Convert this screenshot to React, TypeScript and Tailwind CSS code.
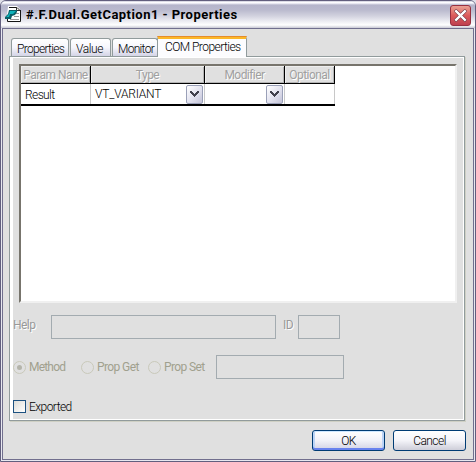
import type { ReactNode } from "react";

function Tab({ label, className }: { label: string; className: string }) {
  return (
    <div className={`h-[18px] whitespace-nowrap rounded-t-[3px] border border-b-0 border-[#919b9c] bg-linear-to-b from-white via-[#f6f6fc] to-[#d4d4e6] pl-[5px] pt-[2px] leading-[16px] ${className}`}>
      {label}
    </div>
  );
}

function HeadCell({ children, className }: { children: ReactNode; className: string }) {
  return (
    <div className={`h-[18px] border-r border-b border-black bg-[#e0e0e0] text-center font-normal leading-[19px] text-[#a0a0a0] shadow-[inset_1px_1px_0_#eeeeee,inset_-1px_-1px_0_#b4b4b4] [text-shadow:1px_1px_0_#fff] ${className}`}>
      {children}
    </div>
  );
}

function DropButton() {
  return (
    <button className="flex h-[19px] w-[17px] items-center justify-center rounded-[2px] border border-[#9aa0b8] bg-linear-to-br from-white via-[#e4e4f0] to-[#c4c4d8]">
      <svg width="9" height="6" viewBox="0 0 9 6" shapeRendering="crispEdges" fill="#40404c">
        <path d="M0 0h2v1h1v1h1v1h1v-1h1v-1h1v-1h2v2h-1v1h-1v1h-1v1h-1v1h-1v-1h-1v-1h-1v-1h-1v-1h-1z" />
      </svg>
    </button>
  );
}

function Radio({ label, checked, className }: { label: string; checked?: boolean; className: string }) {
  return (
    <label className={`flex items-center gap-[3px] font-normal text-[#a0a08e] ${className}`}>
      <span className="flex size-[13px] shrink-0 items-center justify-center rounded-full border border-[#c9c9ba]">
        {checked && <span className="size-[5px] rounded-full bg-[#b4b4aa]" />}
      </span>
      {label}
    </label>
  );
}

export default function App() {
  return (
    <div className="flex h-[462px] w-[476px] flex-col overflow-hidden bg-[#e0e0e8] font-[Roboto,sans-serif] text-[12px] font-light tracking-[-0.55px] text-black">
      <div className="flex h-[462px] flex-col rounded-t-[6px] border border-[#625f7e] bg-[#e8e8f0]">
        <header className="flex h-[27px] shrink-0 items-center rounded-t-[5px] bg-[linear-gradient(to_bottom,#b9b9cd_0,#ffffff_1px,#fafaff_2px,#b5b5cb_4px,#babace_9px,#d2d2df_15px,#f0f0f5_21px,#ffffff_24px,#c8c8d4_27px)] pl-[4px]">
          <svg width="17" height="17" viewBox="0 0 17 17" className="-mt-[1px] shrink-0">
            <path d="M3 0h9l3 3v13H2V9z" fill="#fff" />
            <path d="M4 1.500h8M2.500 11v4.500h13V4" fill="none" stroke="#151515" />
            <path d="M11.500 1v3.500H15M12 1.500l3 3" fill="none" stroke="#333" />
            <path d="M10 7.500h4M9 10.500h5M5 13.500h9" stroke="#999" />
            <path d="M4 4h8v2l-2 3-3 1-1 3H0v-2l3-3z" fill="#0c6068" />
            <path d="M5 5h6L8 8H5l-1 3H1l3-3z" fill="#10b4bc" />
          </svg>
          <h1 className="ml-[4px] mt-px w-[220px] whitespace-nowrap text-[13px] font-bold leading-[18px] tracking-[0.46px]">#.F.Dual.GetCaption1 - Properties</h1>
          <button className="ml-auto mr-[4px] mt-[2px] flex size-[21px] items-center justify-center rounded-[3px] border border-[#983040] bg-linear-to-b from-[#e9a094] via-[#dc5b5b] to-[#bf4050]">
            <svg width="13" height="13" viewBox="0 0 13 13">
              <path d="M1 1l11 11M12 1L1 12" stroke="#64303c" strokeWidth="3.400" />
              <path d="M1.300 1.300l10.400 10.400M11.700 1.300L1.300 11.700" stroke="#fff" strokeWidth="2.400" />
            </svg>
          </button>
        </header>

        <main className="mx-px mb-px flex min-h-0 flex-1 flex-col border border-[#716f8e] bg-[#e0e0e0]">
          <nav className="ml-[8px] mt-[7px] flex h-[20px] shrink-0 items-end">
            <Tab label="Properties" className="w-[58px] tracking-[-0.7px]" />
            <Tab label="Value" className="ml-px w-[41px] tracking-[-0.4px]" />
            <Tab label="Monitor" className="ml-px w-[46px] tracking-[-0.7px]" />
            <div className="relative -mb-px -ml-px h-[21px] w-[90px] whitespace-nowrap rounded-t-[3px] border-x border-t-[3px] border-x-[#919b9c] border-t-[#fbb829] bg-[#fcfcfe] pl-[7px] leading-[16px]">
              COM Properties
              <span className="absolute -left-px -right-px -top-[3px] h-px rounded-t-[3px] bg-[#e68b2c]" />
            </div>
          </nav>

          <section className="ml-[6px] flex h-[365px] w-[456px] shrink-0 flex-col border border-[#919b9c] bg-white pb-px pl-[3px] pr-px pt-px shadow-[1px_1px_0_#cfd0c4]">
            <div className="flex-1 bg-[#e0e0e0]">
              <div className="ml-[6px] mt-[6px] h-[239px] w-[438px] border-2 border-b-[#f0f0f0] border-l-[#77746c] border-r-[#f0f0f0] border-t-[#77746c] bg-white">
                <div className="flex w-[314px]">
                  <HeadCell className="w-[70px]">Param Name</HeadCell>
                  <HeadCell className="w-[114px]">Type</HeadCell>
                  <HeadCell className="w-[80px]">Modifier</HeadCell>
                  <HeadCell className="w-[50px]">Optional</HeadCell>
                </div>
                <div className="flex h-[22px] w-[314px] border-b-2 border-black leading-[22px]">
                  <div className="w-[70px] border-r border-[#c8c8c8] pl-[4px] tracking-[-0.6px]">Result</div>
                  <div className="flex w-[114px] items-center justify-between border-r border-[#c8c8c8] pl-[4px] pr-px">
                    <span className="tracking-[-0.2px]">VT_VARIANT</span>
                    <DropButton />
                  </div>
                  <div className="flex w-[80px] items-center justify-end border-r border-[#c8c8c8] pr-px">
                    <DropButton />
                  </div>
                  <div className="w-[50px] border-r border-[#c8c8c8]" />
                </div>
              </div>

              <div className="mt-[12px] flex h-[24px] font-normal text-[#999] [text-shadow:1px_1px_0_#fff]">
                <span className="w-[38px] leading-[20px]">Help</span>
                <span className="w-[225px] border border-[#a3abb0]" />
                <span className="ml-[7px] w-[15px] leading-[20px]">ID</span>
                <span className="w-[42px] border border-[#a3abb0]" />
              </div>

              <div className="mt-[16px] flex h-[24px] tracking-[-0.6px]">
                <Radio label="Method" checked className="w-[68px] tracking-[-0.8px]" />
                <Radio label="Prop Get" className="w-[67px]" />
                <Radio label="Prop Set" className="w-[68px]" />
                <span className="w-[128px] border border-[#a3abb0]" />
              </div>

              <label className="mt-[21px] flex h-[13px] items-center gap-[3px]">
                <span className="size-[13px] border border-[#1c5180] bg-linear-to-br from-[#dcdcd7] to-white" />
                Exported
              </label>
            </div>
          </section>

          <footer className="ml-[309px] mt-[9px] flex gap-[8px]">
            <button className="h-[21px] w-[73px] rounded-[3px] border border-[#003c74] bg-linear-to-b from-white via-[#f2f2f8] to-[#d2d2e4] text-center leading-[20px] shadow-[inset_0_1px_0_#cee7ff,inset_0_-2px_0_#6982ee,inset_2px_0_0_#bcd4f6,inset_-2px_0_0_#bcd4f6]">OK</button>
            <button className="h-[21px] w-[73px] rounded-[3px] border border-[#003c74] bg-linear-to-b from-white via-[#f4f4f9] to-[#ceced9] text-center leading-[20px]">Cancel</button>
          </footer>
        </main>
      </div>
    </div>
  );
}
